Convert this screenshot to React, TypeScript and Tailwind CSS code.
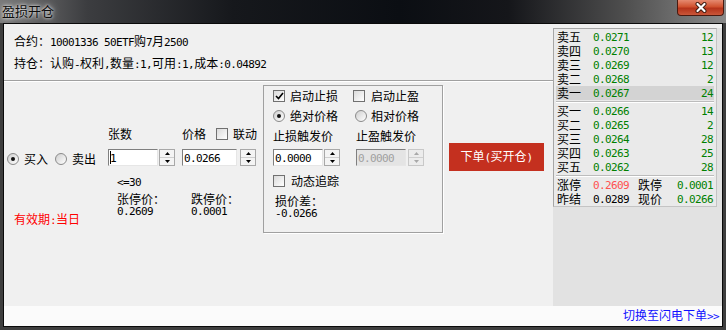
import React from 'react'

// CJK runs keep the CJK font; latin runs get a narrow mono face (SimSun-like half width)
const CJK = /([\u2E80-\u9FFF\u3000-\u303F\uFF00-\uFFEF]+)/

function T({ s, className }: { s: string; className?: string }) {
    const parts = s.split(CJK).filter(Boolean)
    return (
        <span className={className}>
            {parts.map((p, i) =>
                CJK.test(p) ? (
                    <span key={i}>{p}</span>
                ) : (
                    <span key={i} className="font-['DejaVu_Sans_Mono',monospace] text-[11px] tracking-[-0.62px] whitespace-pre">
                        {p}
                    </span>
                )
            )}
        </span>
    )
}

function Radio({ on }: { on?: boolean }) {
    return (
        <div className="flex h-[12px] w-[12px] shrink-0 items-center justify-center rounded-full border border-[#8a8a8a] bg-gradient-to-br from-[#cfcfcf] to-white">
            {on && <div className="h-[4px] w-[4px] rounded-full bg-[#111]" />}
        </div>
    )
}

function Check({ on }: { on?: boolean }) {
    return (
        <div className="flex h-[12px] w-[12px] shrink-0 items-center justify-center border border-[#707070] bg-gradient-to-br from-[#dadada] to-white">
            {on && (
                <svg width="9" height="8" viewBox="0 0 9 8">
                    <path d="M1 4 L3.5 6.5 L8 1" stroke="#000" strokeWidth="1.6" fill="none" />
                </svg>
            )}
        </div>
    )
}

function Spin({ disabled }: { disabled?: boolean }) {
    const c = disabled ? '#a8a8a8' : '#000'
    return (
        <div className={`flex h-[17px] w-[16px] shrink-0 flex-col border ${disabled ? 'border-[#c8c8c8] bg-[#ececec]' : 'border-[#a8a8a8] bg-[#f4f4f4]'}`}>
            <div className="flex flex-1 items-center justify-center border-b border-[#cfcfcf]">
                <svg width="5" height="3">
                    <path d="M2.5 0 L5 3 L0 3Z" fill={c} />
                </svg>
            </div>
            <div className="flex flex-1 items-center justify-center">
                <svg width="5" height="3">
                    <path d="M0 0 L5 0 L2.5 3Z" fill={c} />
                </svg>
            </div>
        </div>
    )
}

function Field({ className, disabled, children }: { className: string; disabled?: boolean; children: React.ReactNode }) {
    return (
        <div
            className={`flex h-[17px] shrink-0 items-center border border-[#7f7f7f] border-b-[#e6e6e6] border-r-[#e6e6e6] pl-[1px] ${
                disabled ? 'bg-[#e4e4e4] text-[#a0a0a0]' : 'bg-white'
            } ${className}`}
        >
            {children}
        </div>
    )
}

const asks = [
    ['卖五', '0.0271', '12'],
    ['卖四', '0.0270', '13'],
    ['卖三', '0.0269', '12'],
    ['卖二', '0.0268', '2'],
    ['卖一', '0.0267', '24'],
]

const bids = [
    ['买一', '0.0266', '14'],
    ['买二', '0.0265', '2'],
    ['买三', '0.0264', '28'],
    ['买四', '0.0263', '25'],
    ['买五', '0.0262', '28'],
]

function BookRow({ row, hi }: { row: string[]; hi?: boolean }) {
    return (
        <div className={`mx-[2px] flex h-[14px] items-center px-[1px] leading-[14px] ${hi ? 'bg-[#d3d3d3]' : ''}`}>
            <span className="w-[36px]">{row[0]}</span>
            <T s={row[1]} className="flex-1 text-[#008000]" />
            <T s={row[2]} className="text-right text-[#008000]" />
        </div>
    )
}

function Sep() {
    return <div className="mx-[2px] mt-[1px] h-[2px] border-t border-b border-t-[#bcbcbc] border-b-white" />
}

export default function App() {
    return (
        <div className="flex h-[330px] w-[726px] flex-col bg-[#3e3e3e] font-['Noto_Sans_CJK_SC',sans-serif] text-[12px] leading-[16px] text-black select-none">
            {/* Title bar */}
            <div className="flex h-[23px] shrink-0 items-start justify-between bg-[linear-gradient(90deg,#7a7a7a_0%,#3c3d40_12%,#16181c_32%,#0b0e13_55%,#15161a_70%,#4e4e4e_86%,#8a8a8a_100%)]">
                <span className="ml-[2px] mt-[3px] text-[13px] leading-[16px] text-[#0d0d0d] [text-shadow:0_0_3px_#fff,0_0_7px_rgba(255,255,255,0.8)]">
                    盈损开仓
                </span>
                <div className="mr-[2px] flex h-[16px] w-[47px] items-center justify-center rounded-b-[4px] border border-t-0 border-[#4a1a10] bg-[linear-gradient(180deg,#e58a70_0%,#d0512f_45%,#b5331a_55%,#c9573a_100%)]">
                    <svg width="14" height="11" viewBox="0 0 14 11">
                        <path d="M3.5 2 L10.5 9 M10.5 2 L3.5 9" stroke="#3a1a10" strokeWidth="4" strokeLinecap="round" />
                        <path d="M3.5 2 L10.5 9 M10.5 2 L3.5 9" stroke="#fff" strokeWidth="2.2" strokeLinecap="round" />
                    </svg>
                </div>
            </div>

            {/* Window body */}
            <div className="flex flex-1 flex-col px-[3px] pb-[3px]">
                <div className="flex flex-1 flex-col border border-[#0a0a0a] bg-[#f0f0f0]">
                    <div className="flex h-[282px]">
                        {/* Left: order form */}
                        <div className="flex w-[549px] shrink-0 flex-col">
                            <div className="flex flex-col pl-[10px] pt-[7px] leading-[20px]">
                                <T s="合约：10001336 50ETF购7月2500" />
                                <T s="持仓：认购-权利,数量:1,可用:1,成本:0.04892" />
                            </div>
                            <div className="mt-[5px] h-[2px] border-t border-b border-t-[#a0a0a0] border-b-white" />

                            <div className="flex items-start whitespace-nowrap">
                                {/* direction */}
                                <div className="w-[104px] shrink-0 pl-[3px] pt-[69px]">
                                    <div className="flex h-[16px] items-center">
                                        <Radio on />
                                        <span className="ml-[5px]">买入</span>
                                        <span className="ml-[7px]">
                                            <Radio />
                                        </span>
                                        <span className="ml-[5px]">卖出</span>
                                    </div>
                                    <div className="ml-[7px] mt-[44px] text-[#ff0000]">
                                        <T s="有效期:当日" />
                                    </div>
                                </div>

                                {/* quantity */}
                                <div className="w-[67px] shrink-0 pt-[44px]">
                                    <div className="h-[16px]">张数</div>
                                    <div className="mt-[7px] flex">
                                        <Field className="w-[50px]">
                                            <span className="h-[13px] w-px bg-black" />
                                            <T s="1" className="-ml-[1px]" />
                                        </Field>
                                        <div className="ml-[1px]">
                                            <Spin />
                                        </div>
                                    </div>
                                    <div className="ml-[9px] mt-[7px] h-[16px]">
                                        <T s="<=30" />
                                    </div>
                                    <div className="ml-[9px] mt-[4px] flex flex-col leading-[11px]">
                                        <span>张停价：</span>
                                        <T s="0.2609" />
                                    </div>
                                </div>

                                {/* price */}
                                <div className="ml-[7px] w-[74px] shrink-0 pt-[44px]">
                                    <div className="flex h-[16px] items-center">
                                        <span>价格</span>
                                        <span className="ml-[10px]">
                                            <Check />
                                        </span>
                                        <span className="ml-[5px]">联动</span>
                                    </div>
                                    <div className="mt-[7px] flex">
                                        <Field className="w-[55px]">
                                            <T s="0.0266" />
                                        </Field>
                                        <div className="ml-[3px]">
                                            <Spin />
                                        </div>
                                    </div>
                                    <div className="ml-[9px] mt-[27px] flex flex-col leading-[11px]">
                                        <span>跌停价：</span>
                                        <T s="0.0001" />
                                    </div>
                                </div>

                                {/* stop loss / take profit group */}
                                <div className="ml-[7px] mt-[3px] h-[148px] w-[180px] shrink-0 border border-[#a0a0a0] pl-[9px] pt-[2px] shadow-[1px_1px_0_#fff]">
                                    <div className="flex h-[16px] items-center">
                                        <div className="flex w-[80px] items-center">
                                            <Check on />
                                            <span className="ml-[5px]">启动止损</span>
                                        </div>
                                        <Check />
                                        <span className="ml-[6px]">启动止盈</span>
                                    </div>
                                    <div className="mt-[4px] flex h-[16px] items-center">
                                        <div className="flex w-[80px] items-center">
                                            <Radio on />
                                            <span className="ml-[5px]">绝对价格</span>
                                        </div>
                                        <span className="ml-[2px]">
                                            <Radio />
                                        </span>
                                        <span className="ml-[4px]">相对价格</span>
                                    </div>
                                    <div className="mt-[4px] flex h-[16px] items-center">
                                        <span className="w-[80px]">止损触发价</span>
                                        <span className="ml-[3px]">止盈触发价</span>
                                    </div>
                                    <div className="mt-[5px] flex">
                                        <div className="flex w-[80px]">
                                            <Field className="w-[50px]">
                                                <T s="0.0000" />
                                            </Field>
                                            <div className="ml-[1px]">
                                                <Spin />
                                            </div>
                                        </div>
                                        <div className="ml-[3px] flex">
                                            <Field className="w-[50px]" disabled>
                                                <T s="0.0000" />
                                            </Field>
                                            <div className="ml-[2px]">
                                                <Spin disabled />
                                            </div>
                                        </div>
                                    </div>
                                    <div className="mt-[7px] flex h-[16px] items-center">
                                        <Check />
                                        <span className="ml-[6px]">动态追踪</span>
                                    </div>
                                    <div className="ml-[2px] mt-[6px] flex flex-col leading-[11px]">
                                        <span>损价差：</span>
                                        <T s="-0.0266" />
                                    </div>
                                </div>

                                {/* submit */}
                                <button className="ml-[6px] mt-[61px] flex h-[28px] w-[95px] shrink-0 items-center justify-center bg-[#c4301f] text-white">
                                    <T s="下单(买开仓)" />
                                </button>
                            </div>
                        </div>

                        {/* Right: order book */}
                        <div className="flex flex-1 flex-col pt-[4px]">
                            <div className="flex flex-1 flex-col bg-[#e2e2e2]">
                                <div className="w-[164px] border border-[#a6a6a6] border-b-[#c4c4c4] border-r-[#c4c4c4] bg-[#eaeaea] pt-[1px]">
                                    {asks.map((r, i) => (
                                        <BookRow key={r[0]} row={r} hi={i === 4} />
                                    ))}
                                    <Sep />
                                    <div className="mt-[1px]">
                                        {bids.map(r => (
                                            <BookRow key={r[0]} row={r} />
                                        ))}
                                    </div>
                                    <Sep />
                                    <div className="mt-[1px]">
                                        <div className="mx-[2px] flex h-[14px] items-center px-[1px] leading-[14px]">
                                            <span className="w-[36px]">涨停</span>
                                            <T s="0.2609" className="w-[45px] text-[#ff5050]" />
                                            <span>跌停</span>
                                            <T s="0.0001" className="flex-1 text-right text-[#008000]" />
                                        </div>
                                        <div className="mx-[2px] flex h-[14px] items-center px-[1px] leading-[14px]">
                                            <span className="w-[36px]">昨结</span>
                                            <T s="0.0289" className="w-[45px]" />
                                            <span>现价</span>
                                            <T s="0.0266" className="flex-1 text-right text-[#008000]" />
                                        </div>
                                    </div>
                                </div>
                            </div>
                        </div>
                    </div>

                    {/* Footer link */}
                    <div className="flex flex-1 items-center justify-end bg-[#fbfbfb] pr-[3px] text-[#1010ff]">
                        <T s="切换至闪电下单>>" />
                    </div>
                </div>
            </div>
        </div>
    )
}
